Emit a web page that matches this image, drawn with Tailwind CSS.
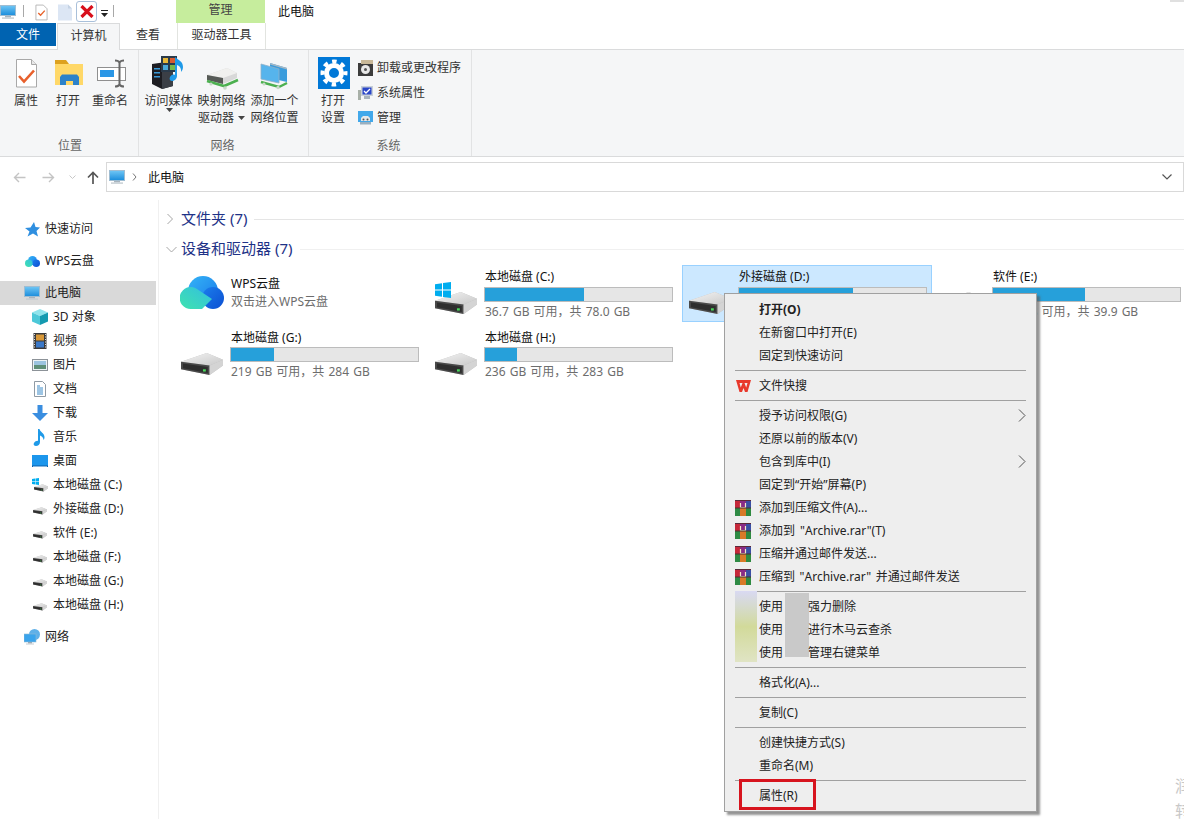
<!DOCTYPE html>
<html lang="zh-CN">
<head>
<meta charset="utf-8">
<title>此电脑</title>
<script src="https://cdn.jsdelivr.net/npm/@tailwindcss/browser@4"></script>
</head>
<body class="relative w-[1184px] h-[819px] overflow-hidden bg-white text-[12px] leading-[17px] text-[#222] font-['Noto_Sans','Noto_Sans_CJK_SC',sans-serif]">

<svg class="w-0 h-0 absolute" aria-hidden="true">
  <defs>
    <linearGradient id="dtop" x1="0" y1="0" x2="1" y2="1"><stop offset="0" stop-color="#f4f4f4"/><stop offset="1" stop-color="#c9c9c9"/></linearGradient>
    <linearGradient id="scr" x1="0" y1="0" x2="0" y2="1"><stop offset="0" stop-color="#6cc4f4"/><stop offset="1" stop-color="#1e8fdc"/></linearGradient>
    <linearGradient id="cl1" x1="0" y1="1" x2="1" y2="0"><stop offset="0" stop-color="#3fe3ae"/><stop offset="1" stop-color="#33bfe0"/></linearGradient>
    <linearGradient id="cl2" x1="0" y1="0" x2="1" y2="1"><stop offset="0" stop-color="#34b4f6"/><stop offset="1" stop-color="#1a78ea"/></linearGradient>
    <linearGradient id="cl3" x1="0" y1="0" x2="1" y2="1"><stop offset="0" stop-color="#1b7eec"/><stop offset="1" stop-color="#0c4fd2"/></linearGradient>
    <symbol id="drive" viewBox="0 0 44 24">
      <polygon points="0,9 27,0 44,7 44,13 30,23 0,17" fill="#bdbdbd"/>
      <polygon points="0,9 27,0 44,7 30,13" fill="url(#dtop)"/>
      <polygon points="0,9 30,13 30,23 0,17" fill="#4a4a4a"/>
      <polygon points="2,11 28,14.5 28,21 2,16" fill="#2e2e2e"/>
      <rect x="23" y="17" width="3" height="2.4" fill="#49d65b"/>
      <polygon points="30,13 44,7 44,13 30,23" fill="#d4d4d4"/>
    </symbol>
    <symbol id="win" viewBox="0 0 16 16">
      <polygon points="0,2.2 7,1.2 7,7.5 0,7.5" fill="#00adef"/>
      <polygon points="8,1 16,0 16,7.5 8,7.5" fill="#00adef"/>
      <polygon points="0,8.5 7,8.5 7,14.8 0,13.8" fill="#00adef"/>
      <polygon points="8,8.5 16,8.5 16,16 8,15" fill="#00adef"/>
    </symbol>
    <symbol id="monitor" viewBox="0 0 16 14">
      <rect x="0" y="0" width="16" height="11" fill="#9fbdd2"/>
      <rect x="1" y="1" width="14" height="9" fill="url(#scr)"/>
      <rect x="5" y="11" width="6" height="1.4" fill="#a8b4bd"/>
      <rect x="2" y="12.4" width="12" height="1.4" fill="#c4ccd2"/>
    </symbol>
    <symbol id="rar" viewBox="0 0 16 16">
      <rect x="0" y="0" width="5" height="8" fill="#c5283a"/>
      <rect x="5" y="0" width="6" height="8" fill="#8a2c86"/>
      <rect x="11" y="0" width="5" height="8" fill="#3a4fa4"/>
      <rect x="0" y="8" width="5" height="8" fill="#2e8a44"/>
      <rect x="5" y="8" width="6" height="8" fill="#d87a28"/>
      <rect x="11" y="8" width="5" height="8" fill="#2f8a40"/>
      <path d="M5.500 3v4.500h5V3" fill="none" stroke="#f4e8c8" stroke-width="1.200"/>
      <rect x="0" y="0" width="16" height="1" fill="#5a2a3a"/>
      <rect x="0" y="7.500" width="16" height="1" fill="#4a3030"/>
    </symbol>
  </defs>
</svg>

<!-- quick access row -->
<div class="flex h-[23px]">
  <svg class="w-[16px] h-[14px] mt-[5px]"><use href="#monitor"/></svg>
  <div class="w-px h-[12px] mt-[5px] ml-[7px] bg-[#a8a8a8]"></div>
  <svg class="w-[13px] h-[17px] mt-[4px] ml-[11px]" viewBox="0 0 14 17"><path d="M1 .5h8l4 4v12H1z" fill="#fff" stroke="#b4b4b4"/><path d="M3.500 9l2.500 2.500L10.500 6.500" fill="none" stroke="#e8642c" stroke-width="1.500"/></svg>
  <svg class="w-[14px] h-[17px] mt-[4px] ml-[10px]" viewBox="0 0 14 17"><path d="M0 .5h10l4 4v12H0z" fill="#dce6f4"/><path d="M10 .5v4h4" fill="#c4d2e4"/></svg>
  <div class="w-[21px] h-[21px] mt-[1px] ml-[4px] border border-[#a9c0da] rounded-[3px] flex items-center justify-center">
    <svg class="w-[14px] h-[13px]" viewBox="0 0 14 13"><path d="M1.500 1l11 11M12.500 1l-11 11" stroke="#d8101c" stroke-width="3.200"/></svg>
  </div>
  <svg class="w-[8px] h-[7px] mt-[10px] ml-[4px]" viewBox="0 0 8 7"><rect width="7" height="1" fill="#222"/><path d="M0 3h7L3.500 7z" fill="#222"/></svg>
  <div class="w-px h-[12px] mt-[5px] ml-[4px] bg-[#a8a8a8]"></div>
  <div class="w-[89px] h-[23px] ml-[62px] bg-[#c6ed9d] text-center text-[#444] leading-[19px]">管理</div>
  <div class="ml-[13px] leading-[24px] text-[#111]">此电脑</div>
</div>

<!-- tabs -->
<div class="flex h-[27px] border-b border-[#dadbdc]">
  <div class="w-[56px] h-[23px] bg-[#0063b1] text-white text-center leading-[23px]">文件</div>
  <div class="w-[63px] h-[27px] ml-px bg-[#f5f6f7] border-x border-t border-[#dadbdc] text-center leading-[24px] text-[#333] relative z-10">计算机</div>
  <div class="w-[56px] text-center leading-[24px] text-[#333]">查看</div>
  <div class="w-[89px] h-[26px] ml-px border-x border-[#e2e4e0] text-center leading-[24px] text-[#333]">驱动器工具</div>
</div>

<!-- ribbon -->
<div class="flex h-[107px] bg-[#f5f6f7] border-b border-[#dadbdc] text-[#333]">
  <section class="w-[139px] border-r border-[#e2e3e4] flex flex-col justify-between pt-[5px] pb-[2px]">
    <div class="flex pl-[5px]">
      <div class="w-[42px] flex flex-col items-center">
        <svg class="w-[42px] h-[37px]" viewBox="0 0 42 37"><path d="M11.500 4.500h15l5 5v22.500h-20z" fill="#fff" stroke="#a8a8a8"/><path d="M26.500 4.500v5h5" fill="#e8e8e8" stroke="#a8a8a8"/><path d="M14 21l5 5.500 10-11" fill="none" stroke="#e8602c" stroke-width="2.600"/></svg>
        <span>属性</span>
      </div>
      <div class="w-[42px] flex flex-col items-center">
        <svg class="w-[42px] h-[37px]" viewBox="0 0 42 37"><path d="M8 5h11l3 4H8z" fill="#dda11f"/><rect x="8" y="9" width="28" height="21" fill="#ffd868"/><path d="M13 30v-8l2-2.500h15l2 2.500v8h-6v-4h-7v4z" fill="#2c82c9"/></svg>
        <span>打开</span>
      </div>
      <div class="w-[42px] flex flex-col items-center">
        <svg class="w-[42px] h-[37px]" viewBox="0 0 42 37"><rect x="8.500" y="12.500" width="28" height="13" fill="#fff" stroke="#8f8f8f"/><rect x="11" y="15" width="14" height="7" fill="#2b97e6"/><path d="M26 5.500c3 0 4 1 4.500 2 .5-1 1.500-2 4.500-2M26 31.500c3 0 4-1 4.500-2 .5 1 1.500 2 4.500 2M30.500 7v23" fill="none" stroke="#666" stroke-width="2"/></svg>
        <span>重命名</span>
      </div>
    </div>
    <div class="text-center text-[#666] pl-[2px]">位置</div>
  </section>

  <section class="w-[170px] border-r border-[#e2e3e4] flex flex-col justify-between pt-[5px] pb-[2px]">
    <div class="flex pl-[3px]">
      <div class="w-[53px] h-[72px] flex flex-col items-center">
        <svg class="w-[53px] h-[37px]" viewBox="0 0 53 37"><polygon points="10,9 24,7 31,10 31,31 20,34 10,29" fill="#1d1d22"/><polygon points="20,12 31,10 31,31 20,34" fill="#3b3f46"/><rect x="12" y="13" width="6" height="1.500" fill="#3a9ad8"/><rect x="12" y="17" width="6" height="1.500" fill="#3a9ad8"/><rect x="12" y="21" width="6" height="1.500" fill="#3a9ad8"/><rect x="19" y="1" width="16" height="16" fill="#2a3a4a"/><rect x="21" y="3" width="5" height="5" fill="#e8b838"/><rect x="28" y="3" width="5" height="5" fill="#d85a30"/><rect x="21" y="10" width="5" height="5" fill="#4aa8d8"/><rect x="28" y="10" width="5" height="5" fill="#78b848"/><path d="M33 2c3 3 8 4 8 10 0 2-1 4-2 5 .5-3-1-6-4-7v11c0 3-3 5-5 5s-3-2-2-4 3-3 5-2z" fill="#1f9ae8"/></svg>
        <span>访问媒体</span>
        <svg class="w-[7px] h-[4px] -mt-px ml-[2px]" viewBox="0 0 7 4"><path d="M0 0h7L3.500 4z" fill="#444"/></svg>
      </div>
      <div class="w-[53px] flex flex-col items-center">
        <svg class="w-[53px] h-[37px]" viewBox="0 0 53 37"><polygon points="12,20 32,13 42,18 42,23 28,29 12,25" fill="#d8d8d8"/><polygon points="12,20 32,13 42,18 28,23" fill="#f0f0ee"/><polygon points="12,20 28,23 28,29 12,25" fill="#565a56"/><path d="M12 26l17 5 14-6" fill="none" stroke="#4cb050" stroke-width="2.600"/><circle cx="16" cy="29" r="1.600" fill="#c8d8c8"/><circle cx="30" cy="33" r="1.800" fill="#c8d8c8"/></svg>
        <span>映射网络</span>
        <span class="flex items-center gap-[4px]">驱动器<svg class="w-[7px] h-[4px]" viewBox="0 0 7 4"><path d="M0 0h7L3.500 4z" fill="#444"/></svg></span>
      </div>
      <div class="w-[53px] flex flex-col items-center">
        <svg class="w-[53px] h-[37px]" viewBox="0 0 53 37"><polygon points="22,8 39,13 39,27 22,23" fill="#3a9cdc"/><polygon points="22,8 39,13 39,14.500 22,9.500" fill="#a8b8c4"/><polygon points="13,9 31,14 31,28 13,24" fill="#56b4ec" stroke="#8fb0c8" stroke-width=".8"/><path d="M13 27l18 5 8-4" fill="none" stroke="#4cb050" stroke-width="2.400"/><circle cx="16" cy="29" r="1.500" fill="#c8d8c8"/><circle cx="30" cy="32.500" r="1.700" fill="#c8d8c8"/></svg>
        <span>添加一个</span>
        <span>网络位置</span>
      </div>
    </div>
    <div class="text-center text-[#666] pr-[2px]">网络</div>
  </section>

  <section class="w-[163px] border-r border-[#e2e3e4] flex flex-col justify-between pt-[5px] pb-[2px]">
    <div class="flex pl-[3px]">
      <div class="w-[42px] flex flex-col items-center">
        <svg class="w-[42px] h-[37px]" viewBox="0 0 42 37"><rect x="6" y="2" width="32" height="32" fill="#0078d7"/><circle cx="22" cy="18" r="7.500" fill="none" stroke="#fff" stroke-width="5"/><circle cx="22" cy="18" r="11.500" fill="none" stroke="#fff" stroke-width="4" stroke-dasharray="4.500 4.530" stroke-dashoffset="2.250"/></svg>
        <span>打开</span>
        <span>设置</span>
      </div>
      <div class="ml-[4px] flex flex-col gap-[8px] pt-[4px]">
        <div class="flex items-center gap-[4px] h-[17px]">
          <svg class="w-[15px] h-[16px]" viewBox="0 0 15 16"><rect x="0" y="3" width="15" height="13" fill="#3c3c3c"/><rect x="3" y="0" width="12" height="4" fill="#c8b898"/><circle cx="7.500" cy="9.500" r="4.500" fill="#e8e8e8"/><circle cx="7.500" cy="9.500" r="1.500" fill="#555"/></svg>
          <span>卸载或更改程序</span>
        </div>
        <div class="flex items-center gap-[4px] h-[17px]">
          <svg class="w-[15px] h-[16px]" viewBox="0 0 15 16"><rect x="0" y="5" width="3" height="10" fill="#a8b0a8"/><rect x="3" y="1" width="12" height="10" fill="#c8d0d8"/><rect x="4.500" y="2.500" width="9" height="7" fill="#2a46c8"/><path d="M6 6l2 2 4-4" fill="none" stroke="#fff" stroke-width="1.300"/><rect x="6" y="11" width="6" height="3" fill="#a8b4bd"/></svg>
          <span>系统属性</span>
        </div>
        <div class="flex items-center gap-[4px] h-[17px]">
          <svg class="w-[15px] h-[16px]" viewBox="0 0 15 16"><rect x="0" y="1" width="15" height="11" fill="#42a8ea"/><path d="M3 11V8l2-2h5l2 2v3" fill="#e8e8e8"/><rect x="2" y="12" width="11" height="2.500" fill="#9ab0c0"/><circle cx="5.500" cy="9.500" r="1" fill="#555"/><circle cx="9.500" cy="9.500" r="1" fill="#555"/></svg>
          <span>管理</span>
        </div>
      </div>
    </div>
    <div class="text-center text-[#666] pr-[3px]">系统</div>
  </section>
</div>

<!-- address row -->
<div class="flex h-[43px] pt-[5px]">
  <div class="w-[106px] h-[30px] flex items-center relative">
    <svg class="w-[13px] h-[11px] ml-[13px]" viewBox="0 0 13 11"><path d="M12.500 5.500H1.500M6 1L1.500 5.500 6 10" fill="none" stroke="#c4c4c4" stroke-width="1.400"/></svg>
    <svg class="w-[13px] h-[11px] ml-[16px]" viewBox="0 0 13 11"><path d="M.5 5.500h11M7 1l4.500 4.500L7 10" fill="none" stroke="#c4c4c4" stroke-width="1.400"/></svg>
    <svg class="w-[7px] h-[4px] ml-[14px]" viewBox="0 0 7 4"><path d="M.5.500l3 3 3-3" fill="none" stroke="#c8c8c8"/></svg>
    <svg class="w-[12px] h-[13px] ml-[11px]" viewBox="0 0 12 13"><path d="M6 13V1.500M1 6.500l5-5 5 5" fill="none" stroke="#555" stroke-width="1.700"/></svg>
  </div>
  <div class="flex-1 h-[30px] border border-[#d9d9d9] flex items-center pl-[2px]">
    <svg class="w-[16px] h-[14px]"><use href="#monitor"/></svg>
    <svg class="w-[5px] h-[8px] ml-[7px]" viewBox="0 0 5 8"><path d="M1 .5L4 4 1 7.500" fill="none" stroke="#777"/></svg>
    <span class="ml-[11px] text-[#111] mt-px">此电脑</span>
    <svg class="w-[10px] h-[6px] ml-auto mr-[11px]" viewBox="0 0 10 6"><path d="M.5.500L5 5 9.500.500" fill="none" stroke="#555" stroke-width="1.200"/></svg>
  </div>
</div>

<!-- body -->
<div class="flex h-[619px]">
  <nav class="w-[159px] border-r border-[#f0f0f0] pt-[17px] pr-[2px] [&_span]:mb-[2px]">
    <div class="flex items-center h-[24px] pl-[25px] gap-[5px]">
      <svg class="w-[15px] h-[15px]" viewBox="0 0 15 15"><path d="M9 0l1.500 5 4.500.5-3.500 3.500 1.500 5.500-5-3-5.500 3 2-5L0 6l5.500-.5z" fill="#2f8fe0"/></svg><span>快速访问</span>
    </div>
    <div class="flex items-center h-[24px] pl-[25px] gap-[5px] mt-[8px]">
      <svg class="w-[15px] h-[11px]" viewBox="0 0 44 32"><circle cx="22" cy="13" r="13" fill="url(#cl2)"/><circle cx="33" cy="21" r="11" fill="url(#cl3)"/><circle cx="11" cy="21" r="11" fill="url(#cl1)"/></svg><span>WPS云盘</span>
    </div>
    <div class="flex items-center h-[24px] pl-[24px] gap-[5px] mt-[8px] bg-[#d9d9d9]">
      <svg class="w-[16px] h-[14px]"><use href="#monitor"/></svg><span>此电脑</span>
    </div>
    <div class="flex items-center h-[24px] pl-[32px] gap-[5px]">
      <svg class="w-[16px] h-[16px]" viewBox="0 0 16 16"><polygon points="8,0 16,3.500 8,7 0,3.500" fill="#8fe4ec"/><polygon points="0,3.500 8,7 8,16 0,12.500" fill="#4cc8d8"/><polygon points="16,3.500 8,7 8,16 16,12.500" fill="#149ab0"/></svg><span>3D 对象</span>
    </div>
    <div class="flex items-center h-[24px] pl-[32px] gap-[5px]">
      <svg class="w-[16px] h-[16px]" viewBox="0 0 16 16"><rect x="1.500" y="0" width="13" height="16" fill="#3a3a3a"/><rect x="4" y="1.500" width="8" height="6" fill="#d89838"/><rect x="4" y="8.500" width="8" height="6" fill="#3a78c8"/><path d="M2.500 1v14M13.500 1v14" stroke="#ddd" stroke-dasharray="1 1.500"/></svg><span>视频</span>
    </div>
    <div class="flex items-center h-[24px] pl-[32px] gap-[5px]">
      <svg class="w-[16px] h-[16px]" viewBox="0 0 16 16"><rect x=".5" y="2.500" width="15" height="11" fill="#eef3f6" stroke="#8c9298"/><rect x="2" y="4" width="12" height="4" fill="#9cc4e0"/><rect x="2" y="8" width="12" height="4" fill="#5f8f78"/></svg><span>图片</span>
    </div>
    <div class="flex items-center h-[24px] pl-[32px] gap-[5px]">
      <svg class="w-[16px] h-[16px]" viewBox="0 0 16 16"><path d="M2.500.5h8l3 3v12h-11z" fill="#fff" stroke="#8f9aa4"/><path d="M5 5h3M5 7h6M5 9h6M5 11h6M5 13h6" stroke="#3a8ac8"/></svg><span>文档</span>
    </div>
    <div class="flex items-center h-[24px] pl-[32px] gap-[5px]">
      <svg class="w-[16px] h-[16px]" viewBox="0 0 16 16"><path d="M5.500 0h5v8H16l-8 8-8-8h5.500z" fill="#3a8ee0"/></svg><span>下载</span>
    </div>
    <div class="flex items-center h-[24px] pl-[32px] gap-[5px]">
      <svg class="w-[16px] h-[17px]" viewBox="0 0 16 17"><path d="M6 0h1.500c.5 3 5 4 5 8 0 1.500-.5 2.500-1 3 0-2-1.500-4-3.500-4.500V13c0 2.500-2 4-4 4s-3-1.500-2-3 3-2.500 4-2z" fill="#1f9ae8"/></svg><span>音乐</span>
    </div>
    <div class="flex items-center h-[24px] pl-[32px] gap-[5px]">
      <svg class="w-[16px] h-[12px]" viewBox="0 0 16 12"><rect width="16" height="12" fill="#1c96ec"/><rect y="10.500" width="16" height="1.500" fill="#0a5fa8"/><rect x="1" y="11" width="14" height=".6" fill="#dcefff"/></svg><span>桌面</span>
    </div>
    <div class="flex items-center h-[24px] pl-[32px] gap-[5px]">
      <svg class="w-[16px] h-[14px]" viewBox="0 0 16 14"><use href="#win" x="0" y="0" width="7" height="7"/><use href="#drive" x="2" y="6" width="14" height="8"/></svg><span>本地磁盘 (C:)</span>
    </div>
    <div class="flex items-center h-[24px] pl-[32px] gap-[5px]">
      <svg class="w-[16px] h-[14px]" viewBox="0 0 16 14"><use href="#drive" x="1" y="5" width="14" height="8"/></svg><span>外接磁盘 (D:)</span>
    </div>
    <div class="flex items-center h-[24px] pl-[32px] gap-[5px]">
      <svg class="w-[16px] h-[14px]" viewBox="0 0 16 14"><use href="#drive" x="1" y="5" width="14" height="8"/></svg><span>软件 (E:)</span>
    </div>
    <div class="flex items-center h-[24px] pl-[32px] gap-[5px]">
      <svg class="w-[16px] h-[14px]" viewBox="0 0 16 14"><use href="#drive" x="1" y="5" width="14" height="8"/></svg><span>本地磁盘 (F:)</span>
    </div>
    <div class="flex items-center h-[24px] pl-[32px] gap-[5px]">
      <svg class="w-[16px] h-[14px]" viewBox="0 0 16 14"><use href="#drive" x="1" y="5" width="14" height="8"/></svg><span>本地磁盘 (G:)</span>
    </div>
    <div class="flex items-center h-[24px] pl-[32px] gap-[5px]">
      <svg class="w-[16px] h-[14px]" viewBox="0 0 16 14"><use href="#drive" x="1" y="5" width="14" height="8"/></svg><span>本地磁盘 (H:)</span>
    </div>
    <div class="flex items-center h-[24px] pl-[24px] gap-[5px] mt-[8px]">
      <svg class="w-[16px] h-[16px]" viewBox="0 0 16 16"><circle cx="10.500" cy="5.500" r="5.500" fill="#5fb0e8"/><rect x="0" y="5" width="12" height="8" fill="#3aa4ec" stroke="#8fb8d4" stroke-width=".6"/><rect x="4" y="13" width="4" height="1.500" fill="#99a8b4"/><rect x="2" y="14.500" width="8" height="1" fill="#c4ccd2"/></svg><span>网络</span>
    </div>
  </nav>

  <main class="flex-1 pt-[6px] pl-[7px] overflow-hidden">
    <div class="flex items-center h-[24px]">
      <svg class="w-[8px] h-[12px] mt-[2px]" viewBox="0 0 8 12"><path d="M1.500 1l5 5-5 5" fill="none" stroke="#a6a6a6"/></svg>
      <span class="ml-[7px] text-[15px] text-[#1e3287]">文件夹 (7)</span>
      <div class="flex-1 h-px bg-[#e5e5e5] ml-[7px] mt-[2px]"></div>
    </div>
    <div class="flex items-center h-[24px] mt-[6px]">
      <svg class="w-[11px] h-[7px] mt-[2px]" viewBox="0 0 11 7"><path d="M.5 1l5 5 5-5" fill="none" stroke="#a6a6a6"/></svg>
      <span class="ml-[4px] text-[15px] text-[#1e3287]">设备和驱动器 (7)</span>
      <div class="flex-1 h-px bg-[#f0f0f0] ml-[8px] mt-[2px]"></div>
    </div>
    <div class="grid grid-cols-[repeat(4,250px)] gap-[4px] mt-[5px] ml-[8px]">
      <div class="flex h-[57px] border border-transparent pl-[5px]">
        <svg class="w-[46px] h-[55px]" viewBox="0 0 46 55"><circle cx="23" cy="25" r="15" fill="url(#cl2)"/><circle cx="33" cy="32" r="11" fill="url(#cl3)"/><path d="M22 43H11a11 11 0 1 1 6-20l15 10z" fill="url(#cl1)"/></svg>
        <div class="ml-[5px] pt-[9px] w-[189px]">
          <div class="text-[#111]">WPS云盘</div>
          <div class="text-[#6d6d6d] mt-px">双击进入WPS云盘</div>
        </div>
      </div>
      <div class="flex h-[57px] border border-transparent pl-[5px]">
        <svg class="w-[44px] h-[55px]" viewBox="0 0 44 55"><use href="#drive" x="1" y="26" width="42" height="23"/><use href="#win" x="1" y="16" width="16" height="16"/></svg>
        <div class="ml-[7px] pt-[2px] w-[189px]">
          <div class="text-[#111]">本地磁盘 (C:)</div>
          <div class="w-[189px] h-[15px] mt-[2px] -ml-px bg-[#e6e6e6] border border-[#bcbcbc]"><div class="h-full w-[53%] bg-[#26a0da]"></div></div>
          <div class="text-[#6d6d6d] mt-px [word-spacing:1px]">36.7 GB 可用，共 78.0 GB</div>
        </div>
      </div>
      <div class="flex h-[57px] bg-[#cce8ff] border border-[#99d1ff] pl-[5px]">
        <svg class="w-[44px] h-[55px]" viewBox="0 0 44 55"><use href="#drive" x="1" y="26" width="42" height="23"/></svg>
        <div class="ml-[7px] pt-[2px] w-[189px]">
          <div class="text-[#111]">外接磁盘 (D:)</div>
          <div class="w-[189px] h-[15px] mt-[2px] -ml-px bg-[#e6e6e6] border border-[#bcbcbc]"><div class="h-full w-[61%] bg-[#26a0da]"></div></div>
        </div>
      </div>
      <div class="flex h-[57px] border border-transparent pl-[5px]">
        <svg class="w-[44px] h-[55px]" viewBox="0 0 44 55"><use href="#drive" x="1" y="26" width="42" height="23"/></svg>
        <div class="ml-[7px] pt-[2px] w-[189px]">
          <div class="text-[#111]">软件 (E:)</div>
          <div class="w-[189px] h-[15px] mt-[2px] -ml-px bg-[#e6e6e6] border border-[#bcbcbc]"><div class="h-full w-[49%] bg-[#26a0da]"></div></div>
          <div class="text-[#6d6d6d] mt-px [word-spacing:1px]">19.1 GB 可用，共 39.9 GB</div>
        </div>
      </div>
      <div class="flex h-[57px] border border-transparent pl-[5px]">
        <svg class="w-[44px] h-[55px]" viewBox="0 0 44 55"><use href="#drive" x="1" y="26" width="42" height="23"/></svg>
        <div class="ml-[6px] pt-[2px] w-[189px]">
          <div class="pl-px text-[#111]">本地磁盘 (G:)</div>
          <div class="h-[15px] mt-[1px] bg-[#e6e6e6] border border-[#bcbcbc]"><div class="h-full w-[23%] bg-[#26a0da]"></div></div>
          <div class="pl-px text-[#6d6d6d] mt-px [word-spacing:1px]">219 GB 可用，共 284 GB</div>
        </div>
      </div>
      <div class="flex h-[57px] border border-transparent pl-[5px]">
        <svg class="w-[44px] h-[55px]" viewBox="0 0 44 55"><use href="#drive" x="1" y="26" width="42" height="23"/></svg>
        <div class="ml-[7px] pt-[2px] w-[189px]">
          <div class="text-[#111]">本地磁盘 (H:)</div>
          <div class="w-[189px] h-[15px] mt-[1px] -ml-px bg-[#e6e6e6] border border-[#bcbcbc]"><div class="h-full w-[17%] bg-[#26a0da]"></div></div>
          <div class="text-[#6d6d6d] mt-px [word-spacing:1px]">236 GB 可用，共 283 GB</div>
        </div>
      </div>
    </div>
  </main>
</div>

<!-- context menu -->
<div class="absolute left-[724px] top-[293px] w-[313px] h-[519px] bg-[#eeeeee] border border-[#a0a0a0] py-[4px] shadow-[3px_3px_2px_rgba(90,90,90,0.65)] text-[#222]">
  <div class="flex items-center h-[23px] pl-[10px]"><span class="w-[24px]"></span><b class="font-bold">打开(O)</b></div>
  <div class="flex items-center h-[23px] pl-[10px]"><span class="w-[24px]"></span>在新窗口中打开(E)</div>
  <div class="flex items-center h-[23px] pl-[10px]"><span class="w-[24px]"></span>固定到快速访问</div>
  <div class="h-px mx-[10px] my-[3px] bg-[#a0a0a0]"></div>
  <div class="flex items-center h-[23px] pl-[10px]"><span class="w-[24px] pl-px"><svg class="w-[15px] h-[12px]" viewBox="0 0 15 12"><path fill-rule="evenodd" d="M0 0h15l-3.500 12H9L7.500 8 6 12H3.500zM3.500 3l1.300 4.500L6.500 3zM8.500 3l1.700 4.500L11.500 3z" fill="#e8392c"/></svg></span>文件快搜</div>
  <div class="h-px mx-[10px] my-[3px] bg-[#a0a0a0]"></div>
  <div class="flex items-center h-[23px] pl-[10px]"><span class="w-[24px]"></span>授予访问权限(G)<svg class="w-[8px] h-[13px] ml-auto mr-[10px]" viewBox="0 0 8 13"><path d="M1 .5l6 6-6 6" fill="none" stroke="#555"/></svg></div>
  <div class="flex items-center h-[23px] pl-[10px]"><span class="w-[24px]"></span>还原以前的版本(V)</div>
  <div class="flex items-center h-[23px] pl-[10px]"><span class="w-[24px]"></span>包含到库中(I)<svg class="w-[8px] h-[13px] ml-auto mr-[10px]" viewBox="0 0 8 13"><path d="M1 .5l6 6-6 6" fill="none" stroke="#555"/></svg></div>
  <div class="flex items-center h-[23px] pl-[10px]"><span class="w-[24px]"></span>固定到“开始”屏幕(P)</div>
  <div class="flex items-center h-[23px] pl-[10px]"><span class="w-[24px]"><svg class="w-[16px] h-[16px]"><use href="#rar"/></svg></span>添加到压缩文件(A)...</div>
  <div class="flex items-center h-[23px] pl-[10px]"><span class="w-[24px]"><svg class="w-[16px] h-[16px]"><use href="#rar"/></svg></span><span class="[word-spacing:2px]">添加到 "Archive.rar"(T)</span></div>
  <div class="flex items-center h-[23px] pl-[10px]"><span class="w-[24px]"><svg class="w-[16px] h-[16px]"><use href="#rar"/></svg></span>压缩并通过邮件发送...</div>
  <div class="flex items-center h-[23px] pl-[10px]"><span class="w-[24px]"><svg class="w-[16px] h-[16px]"><use href="#rar"/></svg></span><span class="[word-spacing:1.500px]">压缩到 "Archive.rar" 并通过邮件发送</span></div>
  <div class="h-px mx-[10px] my-[3px] bg-[#a0a0a0]"></div>
  <div class="relative">
    <div class="absolute left-[10px] top-[-4px] w-[22px] h-[71px] bg-linear-to-b from-[#d9d9f2] via-[#d2da9a] to-[#e0e4c4] blur-[0.5px]"></div>
    <div class="absolute left-[60px] top-[-2px] w-[24px] h-[64px] bg-[#c9c9c9] blur-[0.5px]"></div>
    <div class="flex items-center h-[23px] pl-[10px]"><span class="w-[24px]"></span><span class="relative">使用</span><span class="w-[25px]"></span><span class="relative">强力删除</span></div>
    <div class="flex items-center h-[23px] pl-[10px]"><span class="w-[24px]"></span><span class="relative">使用</span><span class="w-[25px]"></span><span class="relative">进行木马云查杀</span></div>
    <div class="flex items-center h-[23px] pl-[10px]"><span class="w-[24px]"></span><span class="relative">使用</span><span class="w-[25px]"></span><span class="relative">管理右键菜单</span></div>
  </div>
  <div class="h-px mx-[10px] my-[3px] bg-[#a0a0a0] relative"></div>
  <div class="flex items-center h-[23px] pl-[10px]"><span class="w-[24px]"></span>格式化(A)...</div>
  <div class="h-px mx-[10px] my-[3px] bg-[#a0a0a0]"></div>
  <div class="flex items-center h-[23px] pl-[10px]"><span class="w-[24px]"></span>复制(C)</div>
  <div class="h-px mx-[10px] my-[3px] bg-[#a0a0a0]"></div>
  <div class="flex items-center h-[23px] pl-[10px]"><span class="w-[24px]"></span>创建快捷方式(S)</div>
  <div class="flex items-center h-[23px] pl-[10px]"><span class="w-[24px]"></span>重命名(M)</div>
  <div class="h-px mx-[10px] my-[3px] bg-[#a0a0a0]"></div>
  <div class="flex items-center h-[23px] pl-[10px]"><span class="w-[24px]"></span>属性(R)</div>
</div>

<!-- red highlight -->
<div class="absolute left-[739px] top-[779px] w-[77px] h-[31px] border-[3px] border-[#d7141e]"></div>

<!-- clipped watermark -->
<div class="absolute left-[1175px] top-[776px] text-[16px] leading-[20px] text-[#c8c8c8]">润</div>
<div class="absolute left-[1175px] top-[801px] text-[16px] leading-[20px] text-[#c8c8c8]">转</div>
<div class="absolute right-0 top-0 w-[14px] h-[2px] bg-[#e0e0e0]"></div>
</body>
</html>
